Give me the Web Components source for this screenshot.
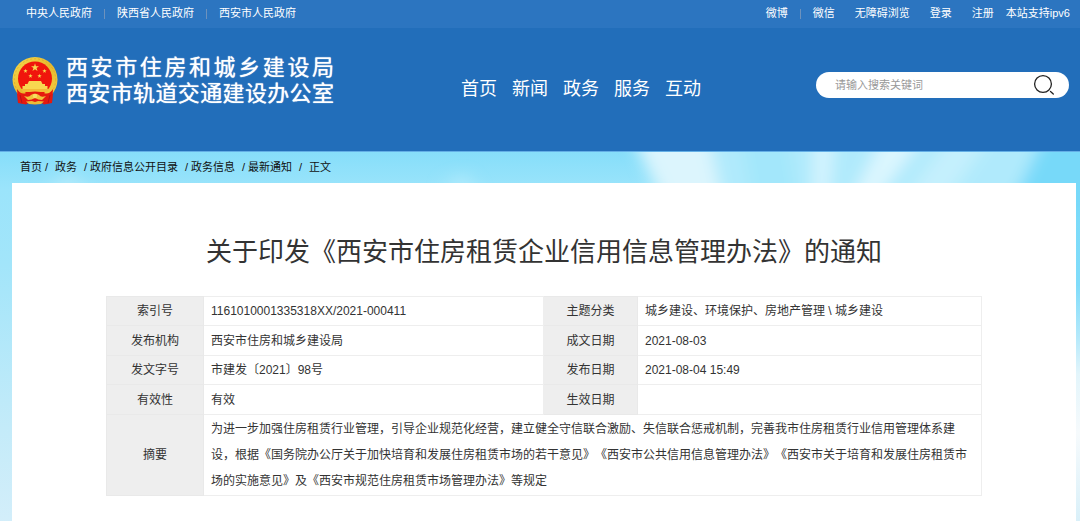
<!DOCTYPE html>
<html lang="zh-CN">
<head>
<meta charset="utf-8">
<meta name="viewport" content="width=device-width, initial-scale=1">
<title>关于印发《西安市住房租赁企业信用信息管理办法》的通知</title>
<style>
  body {
    margin: 0;
    min-height: 100vh;
    display: flex;
    flex-direction: column;
    font-family: "Liberation Sans", "Noto Sans CJK SC", sans-serif;
    font-size: 12px;
    color: #333;
    background: #fff;
    text-spacing-trim: space-all;
  }
</style>
</head>
<body>
<top-bar>
  <top-link>中央人民政府</top-link>
  <top-link divided>陕西省人民政府</top-link>
  <top-link divided>西安市人民政府</top-link>
  <top-link slot="end">微博</top-link>
  <top-link slot="end" divided>微信</top-link>
  <top-link slot="end" spaced>无障碍浏览</top-link>
  <top-link slot="end" spaced>登录</top-link>
  <top-link slot="end" spaced>注册</top-link>
  <top-link slot="end" near>本站支持ipv6</top-link>
</top-bar>
<site-header>
  <site-brand slot="brand">
    <national-emblem slot="emblem"></national-emblem>
    <span>西安市住房和城乡建设局</span>
    <span slot="second">西安市轨道交通建设办公室</span>
  </site-brand>
  <main-nav></main-nav>
  <search-box slot="search"></search-box>
</site-header>
<sky-page>
  <bread-crumb slot="path"></bread-crumb>
  <notice-card>
    <span slot="title">关于印发《西安市住房租赁企业信用信息管理办法》的通知</span>
    <info-table></info-table>
  </notice-card>
</sky-page>

<script>
const define = (name, html) => customElements.define(name, class extends HTMLElement {
  constructor() {
    super();
    this.attachShadow({ mode: "open" }).innerHTML = html;
  }
});

define("top-bar", `
<style>
  :host { display: block; background: #2c75c0; color: #fff; font-size: 11px; line-height: 28px; }
  nav { display: flex; justify-content: space-between; padding: 0 10px 0 26px; }
  div { display: flex; }
</style>
<nav aria-label="快捷链接"><div><slot></slot></div><div><slot name="end"></slot></div></nav>`);

define("top-link", `
<style>
  :host { display: flex; align-items: center; height: 28px; }
  :host([divided])::before { content: ""; width: 1px; height: 10px; margin: 0 12px; background: #6d92bd; }
  :host([spaced]) { margin-left: 20px; }
  :host([near]) { margin-left: 12px; }
  a { color: inherit; text-decoration: none; white-space: nowrap; line-height: 26px; height: 28px; }
</style>
<a href="#"><slot></slot></a>`);

define("site-header", `
<style>
  :host { display: block; background: #226eba; border-bottom: 1px solid #64afe6; }
  header { display: flex; align-items: center; justify-content: space-between; min-height: 123px; padding: 0 11px 0 12px; }
  .nav { margin: 0 0 2px 12px; }
  .search { margin-bottom: 9px; }
  .brand { margin-bottom: 18px; }
</style>
<header>
  <div class="brand"><slot name="brand"></slot></div>
  <div class="nav"><slot></slot></div>
  <div class="search"><slot name="search"></slot></div>
</header>`);

define("site-brand", `
<style>
  :host { display: flex; align-items: center; gap: 8px; color: #fff; }
  .name { width: 268px; font-size: 22px; line-height: 26px; white-space: nowrap; text-shadow: 0 0 1px #fff; }
  .name div { text-align: justify; text-align-last: justify; }
</style>
<slot name="emblem"></slot>
<div class="name"><div><slot></slot></div><div><slot name="second"></slot></div></div>`);

define("national-emblem", `
<style>:host { display: block; width: 46px; height: 50px; } svg { display: block; }</style>
<svg width="46" height="50" viewBox="0 0 46 50" role="img" aria-label="国徽">
  <defs>
    <linearGradient id="g" x1="0" y1="0" x2="1" y2="1">
      <stop offset="0" stop-color="#f6dc50"/><stop offset=".5" stop-color="#e8b92c"/><stop offset="1" stop-color="#f3d145"/>
    </linearGradient>
    <path id="s" d="M0-1 .23-.31.95-.31.37.12.59.81 0 .39-.59.81-.37.12-.95-.31-.23-.31Z"/>
  </defs>
  <path d="M5 34 41 34 40 47 32 48.500 29 46.500 23 48.500 17 46.500 14 48.500 6 47Z" fill="#e2190f"/>
  <circle cx="23" cy="23.500" r="22.500" fill="url(#g)"/>
  <circle cx="23" cy="23.500" r="20.700" fill="none" stroke="#d09a2a" stroke-width="1" stroke-dasharray="2 2" opacity=".5"/>
  <circle cx="23" cy="22.500" r="17" fill="#f0150c"/>
  <g fill="#f8d850">
    <use href="#s" transform="translate(23 11.500) scale(4.200)"/>
    <use href="#s" transform="translate(13.500 15) scale(2.300)"/>
    <use href="#s" transform="translate(32.500 15) scale(2.300)"/>
    <use href="#s" transform="translate(18.500 20) scale(2.300)"/>
    <use href="#s" transform="translate(27.500 20) scale(2.300)"/>
    <path d="M17 25H29L30.500 28H33V30H35.500V33H10.500V30H13V28H15.500Z"/>
    <path d="M9 33H37L35 36H11Z" fill="#f2bd37"/>
  </g>
  <path d="M5 33Q9 39 14 37 17 35.500 23 35.500T32 37Q37 39 41 33L40 46Q34 49 29 46 23 49 17 46 12 49 6 46Z" fill="#e5190f"/>
  <path d="M12 40Q17 42 19 39 23 36.500 27 39 29 42 34 40L30 44Q26 44 23 42 20 44 16 44Z" fill="#f0c43d"/>
  <circle cx="23" cy="40" r="2.200" fill="#f8df62"/>
  <path d="M14 45.500 20 45 23 46 26 45 32 45.500 29 48 23 48.500 17 48Z" fill="#edbd36"/>
  <path d="M8 39 10 47M38 39 36 47" stroke="#b5121b" stroke-width="1"/>
</svg>`);

define("main-nav", `
<style>
  :host { display: block; }
  nav { display: flex; gap: 15px; font-size: 18px; line-height: 26px; }
  a { color: #fff; text-decoration: none; white-space: nowrap; }
</style>
<nav aria-label="主导航"><a href="#">首页</a><a href="#">新闻</a><a href="#">政务</a><a href="#">服务</a><a href="#">互动</a></nav>`);

define("search-box", `
<style>
  :host { display: block; width: 253px; }
  form { display: flex; align-items: center; height: 26px; margin: 0; padding: 0 14px 0 19px; border-radius: 13px; background: #fff; }
  input { flex: 1; min-width: 0; border: 0; padding: 0; outline: 0; background: none; font: inherit; font-size: 11px; line-height: 20px; color: #333; }
  input::placeholder { color: #999; opacity: 1; }
  button { border: 0; padding: 0; background: none; width: 22px; height: 22px; }
  svg { display: block; }
</style>
<form role="search" onsubmit="return false">
  <input type="text" aria-label="搜索关键词" placeholder="请输入搜索关键词">
  <button type="submit" aria-label="搜索">
    <svg width="22" height="22" viewBox="0 0 22 22" fill="none" stroke="#222" stroke-width="1.300" stroke-linecap="round">
      <circle cx="10" cy="10" r="8.400"/><path d="M17.500 17.500 20.300 20"/>
    </svg>
  </button>
</form>`);

define("sky-page", `
<style>
  :host { display: flex; flex-direction: column; flex: 1; position: relative; isolation: isolate; overflow: hidden; }
  svg { position: absolute; inset: 0; width: 100%; height: 100%; z-index: -1; }
  main { flex: 1; display: flex; margin: 0 4px 0 12px; }
  ::slotted(notice-card) { flex: 1; }
</style>
<svg viewBox="0 0 1080 370" preserveAspectRatio="none" aria-hidden="true">
  <defs>
    <linearGradient id="l" x1="0" y1="0" x2="0" y2="1">
      <stop offset="0" stop-color="#86defa"/><stop offset=".1" stop-color="#9be4fb"/><stop offset=".3" stop-color="#a2e5fa"/><stop offset=".75" stop-color="#c4ebf9"/><stop offset="1" stop-color="#d3eefa"/>
    </linearGradient>
    <linearGradient id="r" x1="0" y1="0" x2="0" y2="1">
      <stop offset="0" stop-color="#78daf9"/><stop offset=".36" stop-color="#80dcfa"/><stop offset=".5" stop-color="#b4e9fb"/><stop offset=".6" stop-color="#e3f5fb"/><stop offset=".76" stop-color="#f6fafc"/><stop offset="1" stop-color="#d9f0f9"/>
    </linearGradient>
    <filter id="b" x="-20%" y="-50%" width="140%" height="200%"><feGaussianBlur stdDeviation="8"/></filter>
  </defs>
  <rect width="1080" height="370" fill="url(#l)"/>
  <rect x="1040" width="40" height="370" fill="url(#r)"/>
  <g filter="url(#b)">
    <path d="M630-30H1060L1005 60H670Z" fill="#b0eafc"/>
    <path d="M1050-30H1100V60H1008Z" fill="#77d9f9"/>
    <path d="M625-30H705L725 60H668Z" fill="#dcf5fd"/>
    <path d="M815-30H835L828 60H812Z" fill="#d5f4fe"/>
    <path d="M890-30H935L868 60H845Z" fill="#dbf6fe"/>
    <path d="M960-30H1000L938 60H895Z" fill="#c5f0fd"/>
    <path d="M738-30H785L800 60H755Z" fill="#a3e7fb"/>
    <path d="M440 34 465 24 480 42Z" fill="#b8edfd"/>
    <path d="M40 42 70 22 95 45Z" fill="#b5ebfb"/>
  </g>
</svg>
<slot name="path"></slot>
<main><slot></slot></main>`);

define("bread-crumb", `
<style>
  :host { display: block; }
  ol { display: flex; margin: 0; padding: 0 20px; list-style: none; font-size: 11px; line-height: 31px; color: #111; }
  li { display: flex; white-space: nowrap; }
  i { box-sizing: border-box; width: 13px; padding-right: 3px; text-align: right; font-style: normal; }
  .start { text-align: left; padding: 0 0 0 3px; }
  .end { width: 17px; padding: 0; text-align: center; }
  a { color: inherit; text-decoration: none; }
</style>
<nav aria-label="当前位置"><ol>
  <li><a href="#">首页</a><i class="start">/</i></li>
  <li><a href="#">政务</a><i>/</i></li>
  <li><a href="#">政府信息公开目录</a><i>/</i></li>
  <li><a href="#">政务信息</a><i>/</i></li>
  <li><a href="#">最新通知</a><i class="end">/</i></li>
  <li aria-current="page">正文</li>
</ol></nav>`);

define("notice-card", `
<style>
  :host { display: block; box-sizing: border-box; background: #fff; padding: 49px 94px 26px; }
  h1 { margin: 0 -40px 24px; font-size: 26px; line-height: 40px; font-weight: 400; text-align: center; }
</style>
<article><h1><slot name="title"></slot></h1><slot></slot></article>`);

define("info-table", `
<style>
  :host { display: block; }
  table { width: 100%; table-layout: fixed; border-collapse: collapse; font-size: 12px; line-height: 26px; }
  th, td { border: 1px solid #eee; padding: 1px 7px; }
  tr:nth-child(even) > * { padding-top: 2px; }
  th { background: #eee; border-color: #e9e9e9; font-weight: 400; text-align: center; }
  td { text-align: left; }
  .first { width: 97px; } .value { width: 340px; } .second { width: 94px; }
</style>
<table>
  <colgroup><col class="first"><col class="value"><col class="second"><col></colgroup>
  <tbody>
    <tr><th scope="row">索引号</th><td>1161010001335318XX/2021-000411</td><th scope="row">主题分类</th><td>城乡建设、环境保护、房地产管理 \\ 城乡建设</td></tr>
    <tr><th scope="row">发布机构</th><td>西安市住房和城乡建设局</td><th scope="row">成文日期</th><td>2021-08-03</td></tr>
    <tr><th scope="row">发文字号</th><td>市建发〔2021〕98号</td><th scope="row">发布日期</th><td>2021-08-04 15:49</td></tr>
    <tr><th scope="row">有效性</th><td>有效</td><th scope="row">生效日期</th><td></td></tr>
    <tr><th scope="row">摘要</th><td colspan="3">为进一步加强住房租赁行业管理，引导企业规范化经营，建立健全守信联合激励、失信联合惩戒机制，完善我市住房租赁行业信用管理体系建设，根据《国务院办公厅关于加快培育和发展住房租赁市场的若干意见》《西安市公共信用信息管理办法》《西安市关于培育和发展住房租赁市场的实施意见》及《西安市规范住房租赁市场管理办法》等规定</td></tr>
  </tbody>
</table>`);
</script>
</body>
</html>
